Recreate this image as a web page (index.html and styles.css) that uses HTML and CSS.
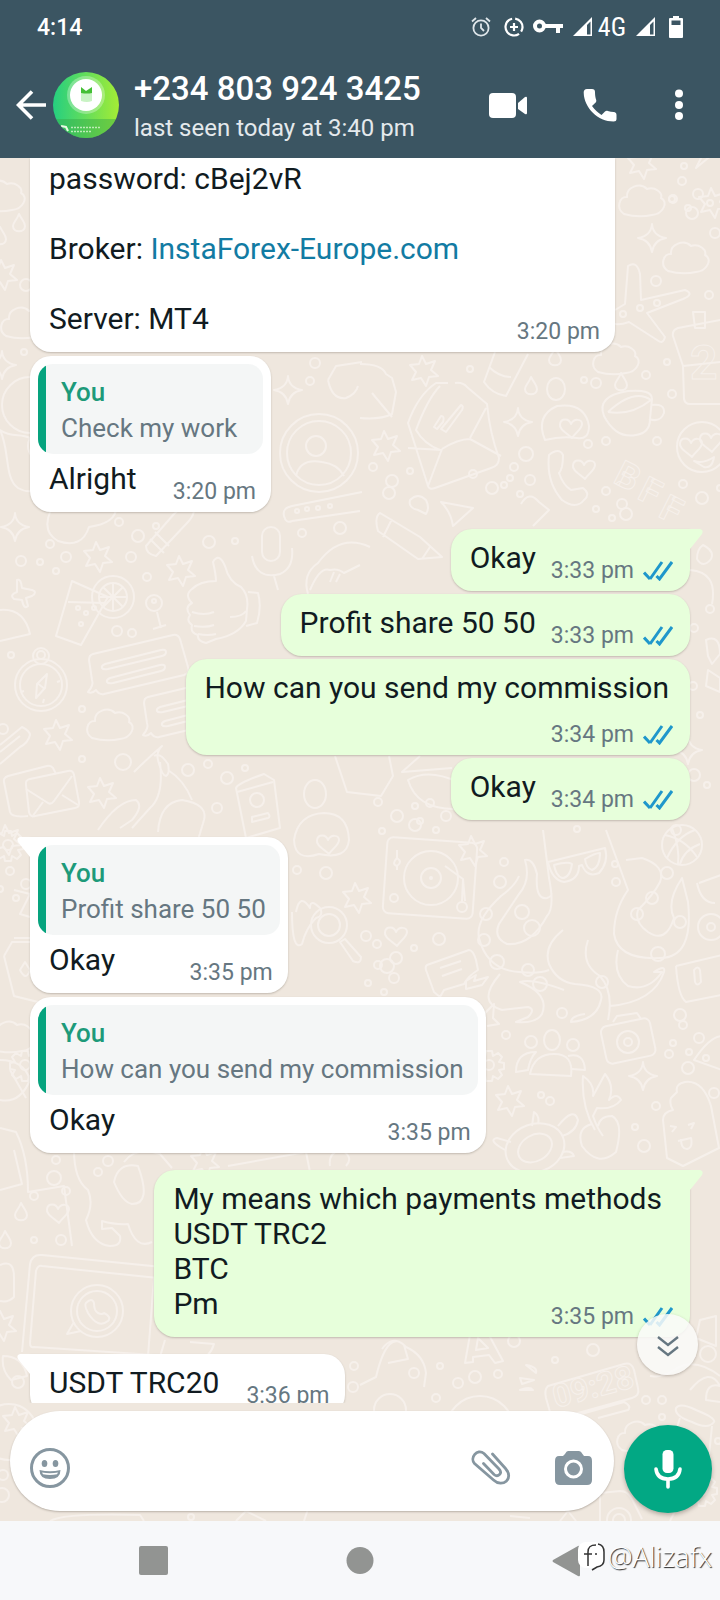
FILE: index.html
```html
<!DOCTYPE html>
<html lang="en">
<head>
<meta charset="utf-8">
<meta name="viewport" content="width=device-width, initial-scale=1">
<title>Chat</title>
<link rel="stylesheet" href="styles.css">
</head>
<body>
<svg class="defs" width="0" height="0" aria-hidden="true">
  <defs>
    <symbol id="ticks" viewBox="0 0 30 20"><path d="M1 11.500l6 6.500M7 18L19 1M13.500 15l3 3L29 1" fill="none" stroke="#1f97cb" stroke-width="3"/></symbol>
    <path id="star" d="M-3-13l4 8 9-3-4 9 7 6-9 1-3 9-5-8-9 2 4-8-6-7 9-1z"/>
    <path id="spark" d="M0-14q1 12 14 14q-12 2-14 14q-2-12-14-14q13-2 14-14z"/>
    <path id="heart" d="M1 10C-6 4-12 1-11-4c1-6 9-6 11 0c3-6 11-5 11 0c0 5-6 8-10 14z"/>
    <path id="cloud" d="M-18 14c-9-6-4-18 3-17c-1-10 13-15 20-8c8-3 16 4 14 9c8 4 2 16-9 17q-14 3-28-1z"/>
    <path id="drop" d="M0-9c3 6 6 8 6 12c0 7-12 7-12 0c0-4 4-6 6-12z"/>
    <g id="gear"><path d="M-3-14h6l1 5 5-3 4 4-3 5 5 1v6l-5 1 3 5-4 4-5-3-1 5h-6l-1-5-5 3-4-4 3-5-5-1v-6l5-1-3-5 4-4 5 3z"/><circle r="5"/></g>
    <g id="dots"><circle cx="-17" cy="-8" r="4"/><circle cx="2" cy="6" r="6"/><circle cx="20" cy="-4" r="3"/></g>
    <g id="dots2"><circle cx="-12" cy="9" r="3"/><circle cx="-2" cy="-9" r="4"/><circle cx="14" cy="4" r="5"/><circle cx="4" cy="18" r="3"/></g>
    <g id="mail"><path d="M-24-12q-1-5 4-6l38-8q5-1 6 4l5 27q1 5-4 6l-40 8q-5 1-6-4z"/><path d="M-24-8l22 14q3 2 6-2L22-21M-18 20l11-15M28 8L12-2"/></g>
    <g id="note"><path d="M-44-12l80-19q5-1 7 4l8 28q2 6-4 8l-80 19q-5 1-8-4q-4 4-8 2q6-7 4-12l-3-20q0-5 4-6z"/><path d="M-32-2l56-14q5-1 5 2t-4 4l-54 13q-5 1-6-1t3-4zM-27 12l50-13q5-1 5 2t-4 4l-48 12q-5 1-6-1t3-4z"/></g>
  </defs>
</svg>

<div class="phone">
  <header class="top">
    <div class="status">
      <time class="status-time">4:14</time>
      <div class="status-icons">
        <svg class="s-alarm" width="20" height="20" viewBox="0 0 20 20" fill="none" stroke="#dfe6ea" stroke-width="1.800"><circle cx="10" cy="11" r="7.600"/><path d="M10 6.500V11l3 3M1 4.500L5 1M19 4.500L15 1"/></svg>
        <svg class="s-data" width="20" height="20" viewBox="0 0 20 20" fill="none" stroke="#fff" stroke-width="2.200"><circle cx="10" cy="10" r="8.500" stroke-dasharray="17 3 30 3.400" transform="rotate(-82 10 10)"/><path d="M10 6v8M6 10h8"/></svg>
        <svg class="s-key" width="30" height="16" viewBox="0 0 30 16" fill="none" stroke="#fff" stroke-width="4"><circle cx="6.500" cy="7" r="4.500"/><path d="M12 7h18M25 8v6"/></svg>
        <svg class="s-signal" width="20" height="20" viewBox="0 0 20 20"><path d="M0 19L19 0v19z" fill="#fff"/><path d="M14 8l3.500-3.500v13H14z" fill="#3b5562"/></svg>
        <span class="net">4G</span>
        <svg class="s-signal2" width="20" height="20" viewBox="0 0 20 20"><path d="M0 19L19 0v19z" fill="#fff"/><path d="M14 8l3.500-3.500v13H14z" fill="#3b5562"/></svg>
        <svg width="14" height="24" viewBox="0 0 14 24"><path d="M4 1h6v2h3q1 0 1 1v18q0 1-1 1H1q-1 0-1-1V4q0-1 1-1h3z" fill="#fff"/><path d="M2.500 5.500h9V10h-9z" fill="#3b5562"/></svg>
      </div>
    </div>
    <div class="toolbar">
      <button class="icon-btn back" aria-label="Back"><svg width="30" height="30" viewBox="0 0 30 30" fill="none" stroke="#fff" stroke-width="3.600"><path d="M16 1.500L2.500 15 16 28.500M2 15h28"/></svg></button>
      <svg class="avatar" width="66" height="66" viewBox="0 0 66 66" aria-hidden="true">
        <defs><linearGradient id="av"><stop offset="0" stop-color="#25cf80"/><stop offset="1" stop-color="#a4ec35"/></linearGradient><clipPath id="avc"><circle cx="33" cy="33" r="33"/></clipPath></defs>
        <g clip-path="url(#avc)"><path fill="url(#av)" d="M0 0h66v66H0z"/><path d="M0 47h66v19H0z" fill="#36a94a" opacity=".45"/><circle cx="33" cy="23" r="19" fill="#fff" opacity=".3"/><circle cx="33" cy="23" r="16" fill="#fff"/><path d="M28 20h11v9q-5 2-11 0z" fill="#c9f3c4"/><path d="M28 15l5 4 6-4v6q-5 1-11 0z" fill="#44bf35"/><path d="M8 54l5 1 2 4" stroke="#e9fbe4" stroke-width="2" fill="none"/><path d="M18 55.500h29M18 59.500h20" stroke="#d8f5cf" stroke-width="1.500" stroke-dasharray="2 1" opacity=".8" fill="none"/></g>
      </svg>
      <div class="peer">
        <h1 class="peer-name">+234 803 924 3425</h1>
        <p class="peer-seen">last seen today at 3:40 pm</p>
      </div>
      <div class="actions">
        <button class="icon-btn" aria-label="Video call"><svg width="38" height="34" viewBox="0 0 38 34" fill="#fff"><rect y="5" width="27" height="25" rx="4"/><path d="M29 15l7-6q2-1 2 1v15q0 2-2 1l-7-5z"/></svg></button>
        <button class="icon-btn" aria-label="Voice call"><svg width="34" height="34" viewBox="0 0 34 34"><path d="M4 1h5q3 0 3 3c0 3 .3 5 1.200 8 .3 1 0 2-.8 2.800L9 18c3 4 5.500 6.500 9.500 9l3.500-3.500c.8-.8 1.800-1 2.800-.6 2 .6 4 .9 6 1q2.700.3 2.700 3V31q0 2.500-3 2.500C15 33.500 1 20 .7 4.500Q.7 1 4 1z" fill="#fff"/></svg></button>
        <button class="icon-btn" aria-label="More options"><svg width="8" height="34" viewBox="0 0 8 34" fill="#fff"><circle cx="4" cy="5.500" r="4"/><circle cx="4" cy="17" r="4"/><circle cx="4" cy="28" r="4"/></svg></button>
      </div>
    </div>
  </header>

  <main class="chat">
    <svg class="wallpaper" viewBox="0 158 720 1363" preserveAspectRatio="xMidYMin slice" aria-hidden="true">
      <use href="#cloud" x="2" y="195"/><use href="#drop" x="19" y="223"/><use href="#drop" x="0" y="236"/><use href="#star" x="4" y="273"/><use href="#cloud" x="24" y="322"/><use href="#spark" x="2" y="365"/><circle cx="26" cy="285" r="6"/><circle cx="24" cy="352" r="3"/><circle cx="30" cy="405" r="28"/><path d="M0 430c12 8 20 3 30 8c-8 16 10 24 16 40q-10 20-28 10C4 478 10 450 0 430z"/>
      <use href="#star" x="643" y="162"/><path d="M696 168l10-20 24-8z"/><use href="#cloud" x="642" y="200"/><use href="#star" x="714" y="201"/><use href="#spark" x="652" y="238"/><use href="#cloud" x="686" y="257"/><use href="#dots" x="690" y="207"/><use href="#dots2" x="684" y="190"/><circle cx="715" cy="233" r="5"/><circle cx="656" cy="281" r="5"/><circle cx="709" cy="295" r="4"/>
      <path d="M615 310l10-6 3-38q9-6 12 8l1 26 44-10q10 4-2 9l-36 14 18 24q-2 8-8 3l-28-18q-14 5-18-1"/><circle cx="640" cy="308" r="3"/><circle cx="657" cy="303" r="3"/><circle cx="623" cy="314" r="3"/>
      <path d="M730 318l-52 10q-6 2-5 8l10 30 1 33q1 5 6 5h40M683 366l47-5M693 312h12v16h-10z"/><text class="doodle-text" x="690" y="379" font-size="48">2</text>
      <use href="#cloud" x="616" y="358"/><use href="#drop" x="555" y="357"/><use href="#drop" x="531" y="386"/><use href="#drop" x="621" y="382"/><path d="M495 352l-11 30q8 12 22 14l22-42M489 367q10 10 22 10"/><ellipse cx="556" cy="389" rx="9" ry="11"/><use href="#star" x="425" y="369"/><circle cx="470" cy="369" r="3"/><circle cx="596" cy="383" r="5"/><circle cx="584" cy="380" r="3"/><circle cx="646" cy="375" r="4"/><circle cx="667" cy="362" r="3"/><circle cx="672" cy="394" r="4"/>
      <path d="M360 364q22 0 26 10l6 4 4 14-4 22q-12 6-32 4M372 393l20 24M455 383q8-1 12 4l20 17q3 30 12 54 0 8-8 10l-56 20q-6 2-7-2l-20-63q10-28 28-40h12M408 448l34 2M442 449q16-10 28-10l31 17M428 486l14-37M470 438l16-30M440 386q-12 12-24 44 8 14 24 20M434 427l7-11q4 0 2 6l-6 7zM441 429l20-24q3 1 1 5l-16 22z"/>
      <path d="M545 440q-10-24 12-34 28-4 32 20 0 14-12 12-16-2-32 2z"/><use href="#heart" x="571" y="428"/><path d="M604 416q-8-20 24-25 24-2 24 8l-2 20q0 14-14 16-20 4-32-19zM608 412q26-24 43-12-20 16-43 12M651 405q14-2 13 8-4 10-15 6"/><use href="#spark" x="518" y="422"/><use href="#star" x="387" y="444"/><circle cx="684" cy="166" r="3"/><circle cx="526" cy="454" r="7"/><circle cx="588" cy="444" r="4"/><circle cx="606" cy="441" r="4"/><circle cx="657" cy="441" r="4"/><circle cx="702" cy="447" r="25"/><use href="#heart" x="691" y="447"/><use href="#heart" x="711" y="442"/><path d="M694 461q10 3 20-4-2 12-10 10z"/>
      <path d="M549 455q10-8 14 0 0 14-4 18 4 12 12 17l12-2q8 6 1 12-8 10-22 0-16-18-13-45z"/><use href="#heart" x="584" y="469"/><g class="doodle-text" font-size="36"><text transform="translate(612 482) rotate(27)">B</text><text transform="translate(636 498) rotate(27)">F</text><text transform="translate(657 516) rotate(27)">F</text></g>
      <use href="#dots" x="490" y="482"/><use href="#dots2" x="516" y="476"/><use href="#dots" x="390" y="475"/><use href="#dots2" x="608" y="500"/><use href="#dots" x="700" y="492"/><circle cx="626" cy="514" r="6"/><circle cx="389" cy="493" r="6"/><path d="M410 500q8-8 16 0 4 8 0 14l-8-4q-10-2-8-10zM441 502l32 6-20 18q-2-14-12-24zM521 504q8-14 18-2l10 8-16 16M380 513l40 24 22 20-24 2-40-28q-4-14 2-18zM392 519l-9 18M430 547l-8 12"/>
      <use href="#spark" x="288" y="390"/><circle cx="315" cy="363" r="5"/><circle cx="310" cy="381" r="4"/><path d="M328 380l8-14 26-4M328 380q4 20 18 18 10-4 12-12"/><circle cx="319" cy="453" r="39"/><circle cx="319" cy="453" r="32"/><circle cx="316" cy="446" r="10"/><path d="M296 476q4-18 26-14 16 2 22 14"/><path d="M292 506l70-14M292 521l68-10M292 506q-10 2-8 10 2 8 8 5"/><circle cx="297" cy="511" r="2"/><circle cx="307" cy="509" r="2"/><circle cx="318" cy="508" r="2"/><circle cx="330" cy="506" r="2"/>
      <path d="M50 512q-8 20 8 29 24 8 31-14 28-4 27-20-10-8-26-6"/><use href="#spark" x="15" y="527"/><path d="M194 502q2 12-6 20l-32 34q-10-2-10-10l28-32q8-6 9-12M150 539l14 14M155 532l14 14"/><use href="#star" x="99" y="555"/><use href="#star" x="182" y="569"/><use href="#dots2" x="52" y="553"/><use href="#dots" x="136" y="530"/><circle cx="131" cy="557" r="5"/><circle cx="147" cy="577" r="4"/><circle cx="209" cy="542" r="6"/><circle cx="235" cy="541" r="3"/><circle cx="21" cy="561" r="5"/>
      <path d="M17 580q4-2 5 8l10 2q6 2 0 6l-6 2 2 8q-4 4-6-6l-8-1q-5-4 3-7zM0 610q24-2 30 24L0 641M72 581l36 16-27 48-25-9zM68 602l37 1"/><circle cx="113" cy="597" r="21"/><circle cx="113" cy="597" r="14"/><path d="M113 583v28M99 597h28M103 587l20 20M123 587l-20 20"/><circle cx="78" cy="608" r="2"/><circle cx="86" cy="613" r="2"/><circle cx="94" cy="608" r="2"/><circle cx="81" cy="624" r="2"/>
      <circle cx="154" cy="603" r="8"/><circle cx="154" cy="601" r="2"/><path d="M157 612l4 16M153 629l13-4"/><path d="M213 562q6-10 12 4 4 16 16 21 8 8 6 22l-1 12q-8 14-30 18l-10 4q-9-2-8-8-8-2-6-10-6-4-2-10-6-8 2-12-8-8 0-14 8-8 24-8 0-6-3-19zM192 612q12 4 22 0M194 626q12 2 20-1M198 634q10 2 18 0M248 592l10 1q4 14-1 30l-11 3M230 617q12 0 16-6"/><rect x="262" y="527" width="18" height="34" rx="9"/><path d="M252 556q4 24 28 18 14-6 12-26M274 576l4 14"/><path d="M308 594q-6-20 10-31 22-30 52-16M310 590q10-24 20-20 8-2 14 3l16-8M334 572l-4 10M340 574l-4 8"/><circle cx="340" cy="528" r="6"/><circle cx="302" cy="533" r="4"/>
      <circle cx="41" cy="685" r="26"/><circle cx="41" cy="685" r="21"/><circle cx="41" cy="656" r="8"/><circle cx="41" cy="655" r="4"/><path d="M47 674l-2 14-9 10 1-14zM37 683l8 6M24 691l-3 1M57 682l3-1M43 703l1-4"/><use href="#note" x="137" y="666"/><use href="#note" x="192" y="709"/><use href="#cloud" x="110" y="724"/><use href="#star" x="59" y="733"/><circle cx="117" cy="631" r="5"/><circle cx="132" cy="633" r="4"/><circle cx="11" cy="655" r="3"/><circle cx="82" cy="709" r="3"/><circle cx="3" cy="729" r="5"/><circle cx="82" cy="759" r="3"/><circle cx="123" cy="762" r="8"/><circle cx="188" cy="770" r="6"/><use href="#dots" x="225" y="772"/><circle cx="217" cy="808" r="5"/><path d="M0 745l22-18q8 4 8 8-2 8-10 12L0 764M0 752l20-16"/><path d="M56 774l-3-6q-2-3-6-2L8 776q-5 2-4 6l6 30q2 6 18 4"/><use href="#mail" x="50" y="797"/><use href="#star" x="103" y="791"/><use href="#star" x="8" y="838"/>
      <path d="M134 772q14-14 28-26-6 6-4 14 4 16 8 16 4-2 2-12-8-12-14-8M168 770q16 10 24 30M98 830q20-30 38-30 8 6-4 20l-12 8M160 762q4 34-10 46l-18 20M158 832q2-30 24-32 26 4 22 20l-6 20"/><path d="M236 788q2-5 28-14l10 6 6 48-34 10z"/><circle cx="257" cy="800" r="7"/><path d="M252 817l16-4q3 4 0 5l-16 4zM237 792l36-10"/><ellipse cx="315" cy="794" rx="11" ry="14"/><path d="M294 840q4-26 30-27 24 0 25 27-2 20-30 14-24 8-25-14z"/><use href="#heart" x="328" y="844"/><path d="M335 756l12 36 34 4 12-20-4-20M420 756l-18 16 50-4"/><path d="M408 780q20-12 50 2l30 12-20 14q-50 6-60-28z"/><use href="#dots" x="395" y="810"/><use href="#dots2" x="432" y="812"/>
      <use href="#gear" x="8" y="845"/><use href="#dots2" x="12" y="880"/><path d="M14 890l16 4-10 20 10 3M14 938h20l4 16M4 956l8-14h24M4 956l10 40 24 6M20 970l5-8 5 8q-4 12-10 0z"/><use href="#cloud" x="12" y="1036"/><path d="M0 1060q24 0 30 20-10 24-30 20M10 1070l16 28M0 1128l16 4q12 24 12 60l36-6 8 60"/>
      <use href="#gear" x="25" y="1065"/>
      <rect x="385" y="840" width="90" height="76" rx="6" transform="rotate(4 430 878)"/><circle cx="431" cy="878" r="27"/><circle cx="431" cy="878" r="10"/><circle cx="431" cy="878" r="1"/><path d="M445 866l18 13-1 22M463 879l2 22"/><circle cx="462" cy="907" r="5"/><circle cx="394" cy="898" r="4"/><path d="M397 850v8q-6 6 0 8v4M397 858q6 4 0 8"/><use href="#star" x="474" y="849"/><use href="#star" x="358" y="896"/><use href="#heart" x="396" y="936"/><circle cx="329" cy="925" r="18"/><circle cx="329" cy="925" r="11"/><path d="M340 942l5-3 16 18q0 8-8 4zM296 912q4-20 14-4 0-10 10 0 4 8-4 10-10 10-14 26-10 8-10-32"/><circle cx="439" cy="939" r="6"/><circle cx="366" cy="936" r="5"/><circle cx="387" cy="966" r="7"/><use href="#dots2" x="380" y="974"/><use href="#dots" x="394" y="952"/><circle cx="326" cy="873" r="6"/><circle cx="297" cy="870" r="4"/><circle cx="415" cy="825" r="6"/><circle cx="382" cy="831" r="3"/><path d="M427 965l42-15q4 0 7 10l2 10q-10 6-14 14l-20 6-4 7-6-5-8-22q-1-4 1-5zM440 968l21-7M442 976l20-7M466 981l10-6-2 6 14-4-6 8-16 4z"/>
      <path d="M543 830l6 48q6 30-2 38-16 30-40 28-14-6-8-20l20-30q12-14 6-34 8-2 12 14-2 26 10 24 6-2 4-6M519 876q-4 10-18 20-26 24-22 42 8 32 40 34 20 2 30-2M563 930q-20 16-14 34 8 18 26 20 30 2 26 16-4 20-30 22 0-6 14-8M500 974q-24 28 2 36l26-3q8 2 0 10l-12 5q20 2 26-8 8-20-22-32 12-4 44 8M588 940q-8 24 12 36 14 16 8 44M606 830l22 60q-14 20-14 44 4 26 46 24 34 0 28-56l-6-24q-16 24-8 40-8 26-26 14-14-10-10-22 16-16 22-28 6-16-18-24l-16 2M618 950q-6 24 10 36 20 6 34-14l-8 0q12-8 10 0-10 30-54 34"/><g><circle cx="486" cy="914" r="6"/><circle cx="484" cy="940" r="6"/><circle cx="497" cy="962" r="7"/><circle cx="522" cy="912" r="7"/><circle cx="532" cy="928" r="8"/><circle cx="528" cy="970" r="6"/><circle cx="540" cy="984" r="7"/><circle cx="637" cy="914" r="6"/><circle cx="652" cy="898" r="6"/><circle cx="680" cy="922" r="6"/><circle cx="658" cy="954" r="7"/><circle cx="602" cy="982" r="6"/></g>
      <path d="M548 862l57-14q4 14-6 25-12 5-17-8l-3 1q0 14-15 16-12-2-16-20zM554 865q14-4 18-1-2 14-10 14-6-2-8-13zM585 859q10-6 15-6 0 14-8 17-6-2-7-11z"/><circle cx="682" cy="845" r="20"/><path d="M665 835q20 4 32 22M672 828q8 20 6 36M695 830q-18 6-28 28M680 864q4-14 20-20"/><circle cx="500" cy="882" r="6"/><circle cx="504" cy="862" r="4"/><circle cx="667" cy="873" r="6"/><circle cx="615" cy="864" r="3"/><circle cx="616" cy="882" r="4"/><circle cx="711" cy="927" r="13"/><circle cx="711" cy="927" r="4"/><path d="M699 883l22-8M697 883q4 20 18 20M676 966l50-12M676 966q2 30 10 36l40-8M694 970q4-5 6 0l1 12q-4 5-6 0z"/>
      <rect x="603" y="1022" width="50" height="38" rx="6" transform="rotate(-12 628 1040)"/><circle cx="628" cy="1042" r="11"/><circle cx="628" cy="1042" r="4"/><path d="M613 1022l4-6 20-3 4 6"/><ellipse cx="552" cy="1040" rx="8" ry="10"/><path d="M530 1074q4-20 24-20t17 22z"/><circle cx="531" cy="1042" r="6"/><path d="M516 1072q0-20 20-20-6 6-8 18zM568 1056q16-4 17 14l-13-1"/><circle cx="573" cy="1045" r="6"/><circle cx="506" cy="1035" r="4"/><circle cx="680" cy="1015" r="6"/><circle cx="562" cy="1013" r="5"/><use href="#dots2" x="685" y="1034"/><use href="#dots" x="686" y="1062"/><use href="#spark" x="643" y="1076"/><use href="#star" x="511" y="1099"/><circle cx="541" cy="1095" r="3"/><circle cx="550" cy="1101" r="4"/><use href="#gear" x="489" y="1065"/><path d="M484 1014l10-10-1 14 6 6-12 2M595 1130q-14-24-12-54 12 8 10 20l12-22q10 12 4 26 8-8 12 0-8 10-24 8l-4 8q4 12 10 20M592 1124q-16 4-10 22 16 22 34 6 8-30-4-36-12 0-14 10M694 1060q16-24 28-24v34zM671 1098l6-6q-2-8 8-10 18-2 26 24l8 42-36 18-16-8-4-38q0-8 10-10-4-6-2-12zM670 1126l6 1-4 5M688 1125l6-2-3 6M678 1141l13-3q2 10-4 11-6 0-6-10"/><ellipse cx="535" cy="1148" rx="30" ry="24" transform="rotate(-20 535 1148)"/><ellipse cx="535" cy="1148" rx="18" ry="13" transform="rotate(-30 535 1148)"/><path d="M558 1126q16-20 20-6-2 12-16 16M505 1150q-18-10-8-12l14 4M532 1126l2-14q6 4 4 12M562 1152q10-2 12 4l-14 2"/><circle cx="635" cy="1127" r="3"/><circle cx="644" cy="1146" r="6"/><circle cx="656" cy="1106" r="4"/><circle cx="714" cy="1093" r="5"/>
      <use href="#heart" x="58" y="1213"/><use href="#drop" x="21" y="1212"/><use href="#drop" x="5" y="1240"/><circle cx="54" cy="1178" r="7"/><circle cx="56" cy="1160" r="4"/><circle cx="66" cy="1191" r="4"/><circle cx="34" cy="1196" r="4"/><circle cx="34" cy="1240" r="3"/><circle cx="61" cy="1240" r="5"/><circle cx="98" cy="1172" r="4"/><circle cx="108" cy="1161" r="5"/><path d="M0 1190l22-6-8-34M74 1150q0 30 14 40 6 14-2 30 6 24 24 26 12 0 10-10l-8-8-10 1 0-8q14 4 26 3 8 26 24 18M114 1182q4-20 24-16 14 38-6 38-10-2-18-22zM124 1162q12-16 36-8l12 14M22 1352l8-88q2-10 12-9l120 12M30 1343l6-72q2-6 6-5l116 12M30 1343q0 5 4 4l120 8M154 1278l-6 78M165 1340l-6 20M0 1265q14-6 14 12v20q-6 6-14 4"/><circle cx="97" cy="1311" r="26"/><path d="M74 1322l-7 12 14-3M86 1303q6-6 8 0 0 8 4 10t6 0q8 4 4 8-10 8-20-8-4-8-2-10z"/><circle cx="97" cy="1311" r="20"/><use href="#star" x="3" y="1324"/><use href="#star" x="206" y="1160"/><path d="M228 1166l78-14 4 20M330 1166q-2-14 12-16 12 8 4 16"/><circle cx="18" cy="1382" r="6"/><path d="M3 1356q20 0 24 20l-16 4q-10-10-8-24zM190 1342l24 2q-4 14-20 20"/>
      <use href="#star" x="18" y="1420"/><circle cx="9" cy="1432" r="28"/><circle cx="3" cy="1475" r="5"/><circle cx="2" cy="1495" r="7"/><path d="M50 1521q14-8 90-6l4 6M236 1521l10-10 20 10M304 1521l6-18"/><circle cx="191" cy="1517" r="3"/><circle cx="354" cy="1366" r="4"/><circle cx="353" cy="1387" r="5"/>
      <path d="M360 1385l16-8q12-50 30-30 18 8 20 26l-2 14M465 1363l6-34q12-2 18 6l14 26-8 2-6-8-16 2v5zM478 1338l10 10-12 2zM382 1349q10-14 22-4l4 14-20 4"/><circle cx="414" cy="1373" r="5"/><circle cx="458" cy="1383" r="5"/><circle cx="475" cy="1377" r="6"/><circle cx="498" cy="1374" r="4"/><circle cx="440" cy="1366" r="3"/><circle cx="436" cy="1398" r="4"/><circle cx="593" cy="1350" r="6"/><circle cx="555" cy="1360" r="3"/><circle cx="514" cy="1341" r="6"/><path d="M526 1365q12 2 10 8zM520 1378l14 2-12 4zM520 1390q10-4 13 0zM548 1386l76-22q8-2 10 6l4 18q2 8-6 10l-72 20q-8 2-10-6l-4-14q-2-8 2-12zM560 1420l64-18q8 4 4 8l-30 8"/><text class="doodle-text" transform="translate(556 1408) rotate(-15)" font-size="32">09:28</text>
      <circle cx="480" cy="1430" r="34"/><circle cx="390" cy="1410" r="16"/><path d="M676 1408q4-6 20 2 20 8 18 12-6 8-22 0-18-6-16-14zM680 1418l-10 30M712 1426l-4 40M650 1376q12 2 24-6 20-14 46 6M690 1390q20-24 30-4-14-4-14 14l14 2M700 1320l16-4v30l-20-8z"/><circle cx="708" cy="1354" r="8"/><circle cx="646" cy="1400" r="4"/><circle cx="662" cy="1400" r="4"/><circle cx="662" cy="1417" r="3"/><use href="#cloud" x="640" y="1436"/><use href="#dots" x="698" y="1445"/><use href="#gear" x="702" y="1490"/><circle cx="619" cy="1520" r="12"/><circle cx="619" cy="1520" r="6"/><path d="M600 1521v-28l20-2q8 0 12 8l10 20M670 1521l10-20h12M560 1521l8-10 8 10M510 1516l20 2"/>
      <path d="M703 545q12 6 8 14-8 10-14 0 0-10 6-14zM690 570q28 2 22 34M706 640q14-6 14 14l-8 10-4-8zM708 670l12 8v14l-14-6z"/><use href="#spark" x="688" y="750"/><circle cx="710" cy="609" r="4"/><circle cx="694" cy="628" r="4"/><circle cx="693" cy="686" r="4"/><circle cx="700" cy="715" r="3"/><circle cx="694" cy="775" r="6"/><circle cx="707" cy="785" r="3"/><circle cx="676" cy="830" r="5"/><circle cx="577" cy="829" r="3"/>
    </svg>

    <div class="messages">
      <article class="msg in cont cut">
        <p class="text">password: cBej2vR<br><br>Broker: <a href="#">InstaForex-Europe.com</a><br><br>Server: MT4</p>
        <time class="meta">3:20 pm</time>
      </article>
      <article class="msg in cont quoted">
        <blockquote class="quote"><b>You</b><span>Check my work</span></blockquote>
        <p class="text">Alright</p><time class="meta">3:20 pm</time>
      </article>
      <article class="msg out tail"><p class="text">Okay</p><div class="meta"><time>3:33 pm</time><svg width="30" height="20" role="img" aria-label="Read"><use href="#ticks"/></svg></div></article>
      <article class="msg out cont"><p class="text">Profit share 50 50</p><div class="meta"><time>3:33 pm</time><svg width="30" height="20" role="img" aria-label="Read"><use href="#ticks"/></svg></div></article>
      <article class="msg out cont stacked"><p class="text">How can you send my commission</p><div class="meta"><time>3:34 pm</time><svg width="30" height="20" role="img" aria-label="Read"><use href="#ticks"/></svg></div></article>
      <article class="msg out cont"><p class="text">Okay</p><div class="meta"><time>3:34 pm</time><svg width="30" height="20" role="img" aria-label="Read"><use href="#ticks"/></svg></div></article>
      <article class="msg in tail quoted">
        <blockquote class="quote"><b>You</b><span>Profit share 50 50</span></blockquote>
        <p class="text">Okay</p><time class="meta">3:35 pm</time>
      </article>
      <article class="msg in cont quoted">
        <blockquote class="quote"><b>You</b><span>How can you send my commission</span></blockquote>
        <p class="text">Okay</p><time class="meta">3:35 pm</time>
      </article>
      <article class="msg out tail overlap"><p class="text">My means which payments methods<br>USDT TRC2<br>BTC<br>Pm</p><div class="meta"><time>3:35 pm</time><svg width="30" height="20" role="img" aria-label="Read"><use href="#ticks"/></svg></div></article>
      <article class="msg in tail"><p class="text">USDT TRC20</p><time class="meta">3:36 pm</time></article>
    </div>

    <form class="composer">
      <div class="field">
        <button type="button" class="icon-btn" aria-label="Emoji"><svg width="40" height="40" viewBox="0 0 40 40"><circle cx="20" cy="20" r="18.500" fill="none" stroke="#8696a0" stroke-width="3"/><ellipse cx="14.500" cy="15.500" rx="2.800" ry="3.500" fill="#8696a0"/><ellipse cx="25.500" cy="15.500" rx="2.800" ry="3.500" fill="#8696a0"/><path d="M9.500 22q10.500 2.500 21 0 0 9-10.500 9T9.500 22z" fill="#8696a0"/><path d="M12 24.500q8 1.500 16 0l-1 1.800q-7 1.200-14 0z" fill="#fff"/></svg></button>
        <input class="entry" type="text" aria-label="Message">
        <button type="button" class="icon-btn" aria-label="Attach"><svg width="40" height="36" viewBox="0 0 40 36" fill="none" stroke="#8696a0" stroke-width="2.800" stroke-linecap="round"><path d="M21.500 4l13 14.500c9 10-3 20-12 11.500L3.500 13.500C-1.500 8 6-2 13 3.500L28 19c4 4.500-1 8.500-5 5.500L12.500 13.500"/></svg></button>
        <button type="button" class="icon-btn" aria-label="Camera"><svg width="38" height="36" viewBox="0 0 38 36"><path d="M13 1h11q2 0 3.500 3L29 6h4q4 0 4 5v19q0 5-5 5H5q-5 0-5-5V11q0-5 4-5h4l2-2q1.500-3 3-3z" fill="#8696a0"/><circle cx="18.500" cy="19" r="8" fill="none" stroke="#fff" stroke-width="3"/></svg></button>
      </div>
      <button type="button" class="mic" aria-label="Record voice message"><svg width="28" height="40" viewBox="0 0 28 40"><rect x="8.500" y="1" width="11" height="23" rx="4.500" fill="#fff"/><path d="M2 20q1 10 12 10t12-10M14 30v8" fill="none" stroke="#fff" stroke-width="3.600" stroke-linecap="round"/></svg></button>
    </form>
    <button type="button" class="to-end" aria-label="Scroll to latest"><svg width="22" height="22" viewBox="0 0 22 22" fill="none" stroke="#667781" stroke-width="2.400"><path d="M1 2l10 8L21 2M1 12l10 8 10-8"/></svg></button>
  </main>

  <nav class="sysnav" aria-label="System">
    <button class="icon-btn" aria-label="Recents"><svg width="30" height="32" viewBox="0 0 30 32"><rect x="1" y="1" width="29" height="29" rx="2" fill="#929492"/></svg></button>
    <button class="icon-btn" aria-label="Home"><svg width="28" height="32" viewBox="0 0 28 32"><circle cx="14" cy="15.500" r="13.500" fill="#929492"/></svg></button>
    <button class="icon-btn" aria-label="System back"><svg width="30" height="32" viewBox="0 0 30 32"><path d="M1 15L26 1q2-1 2 1v28q0 2-2 1L1 17q-1-1 0-2z" fill="#929492"/></svg></button>
    <div class="credit"><svg width="28" height="30" viewBox="0 0 28 30"><rect x="0" y="1" width="25" height="26" rx="8" fill="#fff"/><path d="M18 4c-6 0-8 2-8 7v14M6 13h8M17 13h2M20 3q6 1 6 8v8q0 6-7 7l-5 3" fill="none" stroke="#333" stroke-width="1.500"/></svg><span>@Alizafx</span></div>
  </nav>
</div>
</body>
</html>
```
FILE: styles.css
```css
* { box-sizing: border-box; }

body {
  margin: 0;
  font-family: Roboto, "Noto Sans", sans-serif;
  color: #111b21;
}

h1, p, blockquote { margin: 0; }

button {
  padding: 0;
  border: 0;
  background: none;
  font: inherit;
}

.defs { position: absolute; }

.phone {
  display: flex;
  flex-direction: column;
  height: 100vh;
}

.icon-btn {
  display: flex;
  align-items: center;
  justify-content: center;
}

.icon-btn svg, .meta svg, .status-icons svg, .credit svg { display: block; flex: none; }

/* Header */
.top {
  flex: none;
  height: 158px;
  background: #3b5562;
  color: #fff;
}

.status {
  display: flex;
  align-items: center;
  justify-content: space-between;
  height: 54px;
  padding: 0 37px;
}

.status-time { font-size: 23px; font-weight: 500; }

.status-icons { display: flex; align-items: center; }
.s-alarm { margin-right: 13px; }
.s-data { margin-right: 9px; }
.s-key { margin-right: 10px; }
.s-signal { margin-right: 5px; }
.s-signal2 { margin-right: 13px; margin-left: 10px; }

.net {
  font-family: "Roboto Condensed", "Liberation Sans Narrow", Roboto, sans-serif;
  font-size: 26px;
}

.toolbar {
  display: flex;
  align-items: center;
  height: 102px;
  padding: 0 37px 0 16px;
}

.back { margin-right: 7px; }
.avatar { flex: none; }

.peer { flex: 1; min-width: 0; padding: 5px 0 0 15px; }
.peer-name { font-size: 33px; line-height: 40px; font-weight: 500; }
.peer-seen { font-size: 24px; line-height: 38px; color: #e4e9ec; }
.actions { display: flex; gap: 56px; }
.actions .icon-btn:last-child { margin-left: 2px; }

/* Conversation */
.chat {
  position: relative;
  display: flex;
  flex: 1;
  flex-direction: column;
  min-height: 0;
  background: #efe7de;
}

.wallpaper {
  position: absolute;
  inset: 0;
  width: 100%;
  height: 100%;
  fill: none;
  stroke: #f6f0eb;
  stroke-width: 2;
  stroke-linejoin: round;
}

.doodle-text {
  font-family: Roboto, sans-serif;
  font-weight: 700;
  stroke-width: 1;
}

.messages {
  position: relative;
  display: flex;
  flex: 1;
  flex-direction: column;
  align-items: flex-start;
  min-height: 0;
  padding: 0 30px;
  overflow: hidden;
}

.msg {
  position: relative;
  display: flex;
  flex: none;
  align-items: flex-end;
  justify-content: space-between;
  column-gap: 27px;
  max-width: 585px;
  margin-top: 17px;
  padding: 11px 15px 6px 19px;
  border-radius: 21px;
  background: #fff;
  box-shadow: 0 1px 2px rgba(60, 50, 40, .25);
}

.msg.cont { margin-top: 4px; }

.msg.out {
  align-self: flex-end;
  column-gap: 15px;
  padding-right: 17px;
  background: #e7ffdb;
}

.msg.out.cont { margin-top: 3px; }

.msg.cut {
  width: 100%;
  margin-top: 0;
  padding-top: 3px;
  border-top-left-radius: 0;
  border-top-right-radius: 0;
}

.text {
  margin-bottom: 10px;
  font-size: 30px;
  line-height: 35px;
}

.text a { color: #127ba3; text-decoration: none; }

.meta {
  display: flex;
  align-items: center;
  gap: 9px;
  font-size: 23px;
  line-height: 28px;
  color: #667781;
}

.msg.stacked { flex-direction: column; align-items: flex-start; padding-left: 18px; }
.stacked .text { margin-bottom: 16px; padding-right: 4px; }
.stacked .meta { align-self: flex-end; }

/* The time sits beside the short last line */
.overlap { display: block; }
.overlap .text { padding-right: 11px; }
.overlap .meta { justify-content: flex-end; margin-top: -28px; }

.tail::before {
  content: "";
  position: absolute;
  top: 0;
  width: 14px;
  height: 22px;
  background: inherit;
}

.in.tail { border-top-left-radius: 0; }
.in.tail::before { left: -13px; clip-path: path("M14 0H3Q-1 1 1 5L13 20Q14 21 14 22Z"); }
.out.tail { border-top-right-radius: 0; }
.out.tail::before { right: -13px; clip-path: path("M0 0H11Q15 1 13 5L1 20Q0 21 0 22Z"); }

.quoted {
  display: grid;
  grid-template-columns: 1fr auto;
  min-width: 241px;
  padding-top: 8px;
}

.quote {
  display: flex;
  grid-column: 1 / -1;
  flex-direction: column;
  margin: 0 -7px 7px -11px;
  padding: 10px 14px 8px 23px;
  border-radius: 15px;
  background: linear-gradient(90deg, #06a37e 8px, #f4f6f6 8px);
  font-size: 26px;
  line-height: 36px;
  color: #667781;
}

.quote b { font-weight: 500; color: #1d9a7a; }

/* Composer */
.composer {
  position: relative;
  display: flex;
  flex: none;
  align-items: flex-end;
  gap: 10px;
  padding: 8px 8px 10px 10px;
}

.field {
  display: flex;
  flex: 1;
  align-items: center;
  min-width: 0;
  height: 100px;
  padding: 14px 21px 0 20px;
  border-radius: 50px;
  background: #fff;
  box-shadow: 0 1px 2px rgba(60, 50, 40, .3);
}

.field .icon-btn:last-child { margin-left: 44px; }

.entry {
  flex: 1;
  min-width: 0;
  height: 60px;
  padding: 0 16px;
  border: 0;
  outline: 0;
  background: none;
  font: 30px Roboto, sans-serif;
}

.mic {
  display: flex;
  flex: none;
  align-items: center;
  justify-content: center;
  width: 88px;
  height: 88px;
  margin-bottom: -2px;
  border-radius: 50%;
  background: #02a884;
  box-shadow: 0 2px 4px rgba(60, 50, 40, .35);
}

.to-end {
  position: absolute;
  right: 22px;
  bottom: 146px;
  display: flex;
  align-items: center;
  justify-content: center;
  width: 61px;
  height: 61px;
  padding-top: 2px;
  border-radius: 50%;
  background: rgba(250, 250, 249, .85);
  box-shadow: 0 1px 3px rgba(60, 50, 40, .3);
}

/* System navigation */
.sysnav {
  position: relative;
  display: grid;
  flex: none;
  grid-template-columns: repeat(3, 1fr);
  height: 79px;
  padding: 0 50px;
  background: #f7f8fa;
}

.credit {
  position: absolute;
  right: 8px;
  bottom: 27px;
  display: flex;
  align-items: center;
  gap: 2px;
  font: 300 28px/34px "Open Sans", "Noto Sans", sans-serif;
  color: #fff;
  text-shadow: 1px 1px 1px #222;
}
```
